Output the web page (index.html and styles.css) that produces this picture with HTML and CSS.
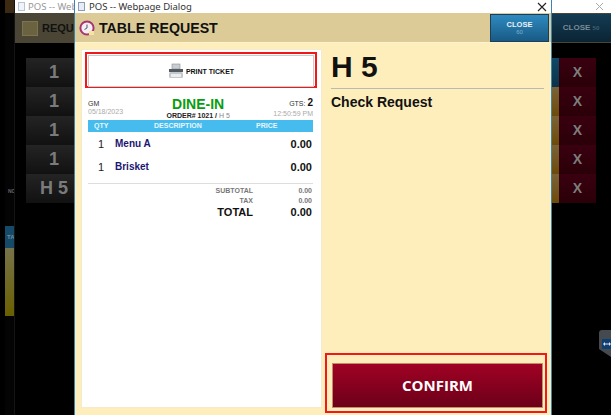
FILE: index.html
```html
<!DOCTYPE html>
<html>
<head>
    <title>POS -- Webpage Dialog</title>
    <link rel="stylesheet" href="styles.css">
</head>
<body>
<div class="desktop">
    <div class="side-window">
        <div class="side-top"></div>
        <div class="side-label">NO</div>
        <div class="side-blue">TA</div>
        <div class="side-olive"></div>
    </div>

    <div class="back-window">
        <div class="back-title">
            <span class="doc-icon dim"></span>
            <span class="back-title-text">POS -- Webpa</span>
            <svg class="back-x" width="9" height="9" viewBox="0 0 9 9"><path d="M1 1L8 8M8 1L1 8" stroke="#aaa" stroke-width="1" fill="none"/></svg>
        </div>
        <div class="back-head">
            <span class="back-note"></span>
            <span class="back-req">REQU</span>
            <span class="back-close">CLOSE <small>50</small></span>
        </div>
        <div class="back-rows">
            <div class="back-row"><div class="row-name">1</div><div class="row-fill"></div><div class="row-strip blue"></div><div class="row-x">X</div></div>
            <div class="back-row"><div class="row-name">1</div><div class="row-fill"></div><div class="row-strip"></div><div class="row-x">X</div></div>
            <div class="back-row"><div class="row-name">1</div><div class="row-fill"></div><div class="row-strip"></div><div class="row-x">X</div></div>
            <div class="back-row"><div class="row-name">1</div><div class="row-fill"></div><div class="row-strip"></div><div class="row-x">X</div></div>
            <div class="back-row"><div class="row-name">H 5</div><div class="row-fill"></div><div class="row-strip"></div><div class="row-x">X</div></div>
        </div>
        <div class="back-handle">
            <svg width="10" height="10" viewBox="0 0 10 10">
                <rect width="10" height="10" fill="#0e3f72"/>
                <path d="M1 5L3 3V7ZM9 5L7 3V7ZM3 4.5H7V5.5H3Z" fill="#dfe6ee"/>
            </svg>
        </div>
    </div>

    <div class="dialog">
        <div class="title-bar">
            <span class="doc-icon"></span>
            <span class="title-text">POS -- Webpage Dialog</span>
            <svg class="title-x" width="10" height="10" viewBox="0 0 10 10"><path d="M1 1L9 9M9 1L1 9" stroke="#222" stroke-width="1.1" fill="none"/></svg>
        </div>
        <div class="head">
            <svg class="clock" width="16" height="16" viewBox="0 0 16 16">
                <circle cx="8" cy="8" r="6.6" fill="#f4eef4" stroke="#a8356f" stroke-width="2"/>
                <path d="M8 4.5V8L5.5 9.5" stroke="#555" stroke-width="1" fill="none"/>
                <rect x="10" y="11" width="5" height="4" fill="#f2e6a0"/>
            </svg>
            <h1 class="head-title">TABLE REQUEST</h1>
            <div class="close-btn">CLOSE<small>60</small></div>
        </div>
        <div class="content">
            <div class="ticket">
                <div class="red-box print-box">
                    <div class="print-btn">
                        <svg width="16" height="16" viewBox="0 0 16 16">
                            <rect x="4" y="1" width="8" height="5" fill="#c9ccd0" stroke="#8b8f94" stroke-width="0.6"/>
                            <rect x="1" y="6" width="14" height="3" fill="#555a60"/>
                            <rect x="1" y="9" width="14" height="6" rx="1.5" fill="#c4c7cb"/>
                            <rect x="3" y="11" width="10" height="3" fill="#eceded"/>
                        </svg>
                        <span>PRINT TICKET</span>
                    </div>
                </div>
                <div class="ticket-info">
                    <div class="info-left">
                        <div class="server">GM</div>
                        <div class="muted">05/18/2023</div>
                    </div>
                    <div class="info-mid">
                        <div class="dine">DINE-IN</div>
                        <div class="order">ORDER# <b>1021</b> / <span class="order-table">H 5</span></div>
                    </div>
                    <div class="info-right">
                        <div class="server">GTS: <b>2</b></div>
                        <div class="muted">12:50:59 PM</div>
                    </div>
                </div>
                <div class="col-head">
                    <span class="col-qty">QTY</span>
                    <span class="col-desc">DESCRIPTION</span>
                    <span class="col-price">PRICE</span>
                </div>
                <div class="item">
                    <span class="item-qty">1</span>
                    <span class="item-name">Menu A</span>
                    <span class="item-price">0.00</span>
                </div>
                <div class="item">
                    <span class="item-qty">1</span>
                    <span class="item-name">Brisket</span>
                    <span class="item-price">0.00</span>
                </div>
                <div class="totals">
                    <div class="sum-row"><span>SUBTOTAL</span><span class="sum-val">0.00</span></div>
                    <div class="sum-row"><span>TAX</span><span class="sum-val">0.00</span></div>
                    <div class="sum-row total"><span>TOTAL</span><span class="sum-val">0.00</span></div>
                </div>
            </div>
            <div class="request">
                <div class="table-name">H 5</div>
                <div class="req-type">Check Request</div>
                <div class="red-box confirm-box">
                    <div class="confirm-btn">CONFIRM</div>
                </div>
            </div>
        </div>
    </div>
</div>
</body>
</html>
```

FILE: styles.css
```css
html, body {
    margin: 0;
    height: 100%;
    background-color: #000;
    overflow: hidden;
}

.desktop {
    position: relative;
    width: 611px;
    height: 415px;
    overflow: hidden;
    background-color: #000;
    font-family: "Liberation Sans", Arial, sans-serif;
}

/* windows behind the dialog */
.side-window {
    position: absolute;
    left: 5px;
    top: 0;
    width: 9px;
    height: 415px;
    display: flex;
    flex-direction: column;
    background-color: #040404;
}

.side-top {
    height: 13px;
    background-color: #3c2a12;
}

.side-label {
    margin-top: 175px;
    height: 38px;
    padding-left: 3px;
    font-size: 5px;
    font-weight: bold;
    color: #666;
}

.side-blue {
    height: 22px;
    line-height: 22px;
    padding-left: 2px;
    font-size: 6px;
    font-weight: bold;
    color: #6f8c9c;
    background-color: #154a68;
}

.side-olive {
    height: 68px;
    background: linear-gradient(#77734a, #6a6000);
}

.back-window {
    position: absolute;
    left: 14px;
    top: 0;
    width: 597px;
    height: 415px;
    display: flex;
    flex-direction: column;
    border-left: 1px solid #151515;
    box-sizing: border-box;
    background-color: #000;
}

.back-title {
    display: flex;
    align-items: center;
    height: 13px;
    padding-left: 3px;
    background-color: #fff;
    font-family: "Noto Sans", sans-serif;
    font-size: 9.5px;
    color: #999;
}

.back-title-text {
    margin-left: 3px;
    white-space: nowrap;
}

.back-x {
    margin-left: auto;
    margin-right: 7px;
}

.back-head {
    display: flex;
    align-items: center;
    height: 30px;
    background-color: #4a4535;
}

.back-note {
    width: 14px;
    height: 13px;
    margin-left: 7px;
    background-color: #6a6240;
    border: 1px solid #7c744e;
}

.back-req {
    margin-left: 4px;
    font-size: 11px;
    font-weight: bold;
    color: #111;
}

.back-close {
    margin-left: auto;
    width: 60px;
    height: 28px;
    line-height: 28px;
    text-align: center;
    font-size: 8px;
    font-weight: bold;
    color: #7b8b96;
    background: linear-gradient(#143c54, #0a2434);
}

.back-close small {
    font-size: 6px;
    color: #42606f;
}

.back-rows {
    display: flex;
    flex-direction: column;
    margin-top: 15px;
    margin-left: 11px;
}

.back-row {
    display: flex;
    height: 29px;
}

.row-name {
    width: 48px;
    padding-left: 8px;
    box-sizing: border-box;
    line-height: 29px;
    text-align: center;
    font-size: 18px;
    font-weight: bold;
    color: #7b7b7b;
    background: linear-gradient(#242424, #111);
}

.row-fill {
    width: 477px;
}

.row-strip {
    width: 8px;
    background: linear-gradient(#7a6338, #6e4a08);
}

.row-strip.blue {
    background: linear-gradient(#0f4a68, #0b3248);
}

.row-x {
    width: 37px;
    line-height: 29px;
    text-align: center;
    font-size: 14px;
    font-weight: bold;
    color: #7d7d7d;
    background: linear-gradient(#3a0010, #2a0008);
}

.back-handle {
    position: absolute;
    right: 0;
    top: 330px;
    width: 12px;
    height: 27px;
    padding: 5px 0 0 3px;
    box-sizing: border-box;
    background-color: #454a50;
    border-radius: 3px 0 0 0;
    clip-path: polygon(0 0, 100% 0, 100% 100%, 0 70%);
}

/* dialog */
.dialog {
    position: absolute;
    left: 74px;
    top: 0;
    width: 478px;
    height: 415px;
    box-sizing: border-box;
    display: flex;
    flex-direction: column;
    border-left: 1px solid #3a84b4;
    border-right: 1px solid #3a84b4;
    background-color: #fdeebb;
}

.title-bar {
    display: flex;
    align-items: center;
    height: 13px;
    padding-left: 3px;
    background-color: #fff;
    font-family: "Noto Sans", sans-serif;
    font-size: 9.5px;
    color: #333;
}

.title-text {
    margin-left: 4px;
}

.title-x {
    margin-left: auto;
    margin-right: 4px;
}

.doc-icon {
    width: 7px;
    height: 9px;
    box-sizing: border-box;
    background-color: #e6edf6;
    border: 1px solid #8b9db5;
}

.doc-icon.dim {
    opacity: 0.6;
}

.head {
    display: flex;
    align-items: center;
    height: 30px;
    padding-left: 4px;
    padding-right: 2px;
    background-color: #dccb97;
    border-bottom: 1px solid #fdf3d0;
    box-sizing: border-box;
}

.head-title {
    margin: 0 0 0 4px;
    font-size: 14.2px;
    font-weight: bold;
    color: #111;
}

.close-btn {
    margin-left: auto;
    width: 59px;
    height: 28px;
    box-sizing: border-box;
    padding-top: 5px;
    text-align: center;
    font-size: 7.5px;
    line-height: 9px;
    font-weight: bold;
    color: #e8f2f8;
    background: linear-gradient(#2f8abf, #185a85);
    border: 1px solid #1d3f56;
}

.close-btn small {
    display: block;
    font-size: 6px;
    line-height: 7px;
    font-weight: normal;
    color: #7fb0cc;
}

.content {
    flex: 1;
    display: flex;
    padding: 6px;
}

.red-box {
    border: 2px solid #f01818;
    box-sizing: border-box;
}

.ticket {
    width: 241px;
    height: 359px;
    box-sizing: border-box;
    padding: 2px 8px 0 6px;
    background-color: #fff;
    border: 1px solid #f3ead0;
}

.print-box {
    height: 36px;
    margin: 0 -4px 0 -3px;
    padding: 1px;
}

.print-btn {
    height: 30px;
    display: flex;
    align-items: center;
    justify-content: center;
    gap: 2px;
    border: 1px solid #ccc;
    font-size: 7px;
    font-weight: bold;
    color: #111;
}

.ticket-info {
    display: flex;
    justify-content: space-between;
    height: 24px;
    margin-top: 8px;
}

.info-left, .info-right {
    font-size: 7px;
    line-height: 8px;
    color: #333;
}

.info-left {
    padding-top: 4px;
}

.info-right {
    padding-top: 3px;
    text-align: right;
}

.info-right b {
    font-size: 10px;
    color: #111;
}

.muted {
    color: #aaa;
}

.info-right .muted {
    margin-top: 2px;
}

.info-mid {
    text-align: center;
}

.dine {
    font-size: 14px;
    line-height: 16px;
    font-weight: bold;
    color: #0a9c10;
}

.order {
    font-size: 7px;
    line-height: 8px;
    font-weight: bold;
    color: #222;
}

.order-table {
    font-weight: normal;
    color: #888;
}

.col-head {
    display: flex;
    height: 12px;
    line-height: 12px;
    font-size: 7px;
    font-weight: bold;
    color: #e8f6fc;
    background-color: #46bcee;
}

.col-qty {
    width: 66px;
    padding-left: 6px;
    box-sizing: border-box;
}

.col-desc {
    width: 102px;
}

.col-price {
    width: 40px;
}

.item {
    display: flex;
    align-items: center;
    height: 23px;
    font-weight: bold;
}

.item-qty {
    width: 27px;
    padding-left: 10px;
    box-sizing: border-box;
    font-size: 11px;
    font-weight: normal;
    color: #222;
}

.item-name {
    font-size: 10px;
    color: #1c1670;
}

.item-price {
    margin-left: auto;
    padding-right: 1px;
    font-size: 11px;
    color: #111;
}

.totals {
    margin-top: 5px;
    padding-top: 2px;
    border-top: 1px solid #ddd;
}

.sum-row {
    display: flex;
    justify-content: flex-end;
    height: 10px;
    line-height: 10px;
    font-size: 7px;
    font-weight: bold;
    color: #777;
}

.sum-val {
    width: 60px;
    padding-right: 1px;
    box-sizing: border-box;
    text-align: right;
}

.total {
    height: 13px;
    line-height: 13px;
    font-size: 11px;
    color: #111;
}

.request {
    flex: 1;
    display: flex;
    flex-direction: column;
    padding-left: 9px;
}

.table-name {
    font-size: 30px;
    line-height: 36px;
    font-weight: bold;
    color: #111;
    border-bottom: 1px solid #b9b9b5;
    padding-bottom: 3px;
    margin-right: 1px;
}

.req-type {
    margin-top: 5px;
    font-size: 14px;
    font-weight: bold;
    color: #111;
}

.confirm-box {
    margin: auto -2px -4px -6px;
    height: 60px;
    padding: 8px 2px 3px 5px;
}

.confirm-btn {
    height: 43px;
    line-height: 43px;
    text-align: center;
    font-family: "Open Sans", sans-serif;
    font-size: 15px;
    font-weight: bold;
    color: #fff;
    background: linear-gradient(#a00224, #6c0019);
    border: 1px solid #c98a6a;
}
```
